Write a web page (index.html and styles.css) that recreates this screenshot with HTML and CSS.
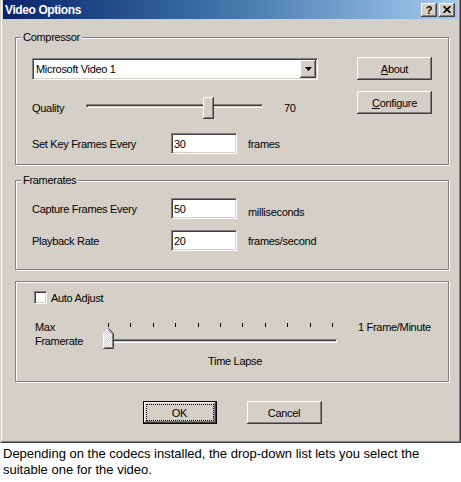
FILE: index.html
```html
<!DOCTYPE html>
<html lang="en">
<head>
<meta charset="utf-8">
<title>Video Options</title>
<link rel="stylesheet" href="styles.css">
</head>
<body>
<div class="window">
  <div class="frame">
    <div class="titlebar">
      <span class="title">Video Options</span>
      <div class="caption-btns">
        <span class="cbtn help">?</span>
        <span class="cbtn close"><svg width="8" height="7" viewBox="0 0 8 7"><path d="M0.6 0.2 L7.4 6.8 M7.4 0.2 L0.6 6.8" stroke="#000" stroke-width="1.7" fill="none"/></svg></span>
      </div>
    </div>
    <div class="client">
      <fieldset class="group">
        <legend>Compressor</legend>
        <div class="gbody comp-body">
          <div class="comp-left">
            <div class="combo">
              <span class="combo-text">Microsoft Video 1</span>
              <span class="combo-btn"><svg width="7" height="4" viewBox="0 0 7 4"><path d="M0 0h7L3.5 4z" fill="#000"/></svg></span>
            </div>
            <div class="row quality-row">
              <span class="q-label">Quality</span>
              <div class="hslider">
                <div class="h-track"></div>
                <div class="h-thumb"></div>
              </div>
              <span class="q-value">70</span>
            </div>
            <div class="row field-row kf-row">
              <span class="f-label">Set Key Frames Every</span>
              <span class="edit">30</span>
              <span class="unit">frames</span>
            </div>
          </div>
          <div class="comp-right">
            <button class="btn side-btn"><u>A</u>bout</button>
            <button class="btn side-btn cfg"><u>C</u>onfigure</button>
          </div>
        </div>
      </fieldset>

      <fieldset class="group g-rates">
        <legend>Framerates</legend>
        <div class="gbody rates-body">
          <div class="row field-row">
            <span class="f-label">Capture Frames Every</span>
            <span class="edit">50</span>
            <span class="unit ms">milliseconds</span>
          </div>
          <div class="row field-row pb-row">
            <span class="f-label">Playback Rate</span>
            <span class="edit">20</span>
            <span class="unit">frames/second</span>
          </div>
        </div>
      </fieldset>

      <fieldset class="group g-lapse">
        <div class="gbody lapse-body">
          <div class="check-row">
            <span class="checkbox"></span>
            <span class="check-label">Auto Adjust</span>
          </div>
          <div class="lapse-row">
            <span class="lapse-label">Max<br>Framerate</span>
            <div class="tslider">
              <div class="ticks"><i></i><i></i><i></i><i></i><i></i><i></i><i></i><i></i><i></i><i></i><i></i></div>
              <div class="t-track"></div>
              <svg class="t-thumb" width="11" height="21" viewBox="0 0 11 21">
                <defs>
                  <pattern id="dith" width="2" height="2" patternUnits="userSpaceOnUse">
                    <rect width="2" height="2" fill="#ffffff"/>
                    <rect width="1" height="1" fill="#D4D0C8"/>
                    <rect x="1" y="1" width="1" height="1" fill="#D4D0C8"/>
                  </pattern>
                </defs>
                <path d="M0.5 5.5 L5.5 0.5 L10.5 5.5 V20.5 H0.5 Z" fill="url(#dith)"/>
                <path d="M0.5 20.5 V5.5 L5.5 0.5" stroke="#ffffff" fill="none"/>
                <path d="M5.5 0.5 L10.5 5.5 V20.5 H0.5" stroke="#404040" fill="none"/>
                <path d="M5.5 2 L9.5 6 V19.5 H1.5" stroke="#808080" fill="none"/>
              </svg>
            </div>
            <span class="lapse-right">1 Frame/Minute</span>
          </div>
          <div class="lapse-caption">Time Lapse</div>
        </div>
      </fieldset>

      <div class="actions">
        <button class="btn btn-default"><span class="focus">OK</span></button>
        <button class="btn btn-cancel">Cancel</button>
      </div>
    </div>
  </div>
</div>
<p class="caption">Depending on the codecs installed, the drop-down list lets you select the suitable one for the video.</p>
</body>
</html>
```

FILE: styles.css
```css
* { box-sizing: border-box; }

html, body {
  margin: 0;
  padding: 0;
  background: #ffffff;
}

body {
  width: 461px;
  height: 482px;
  overflow: hidden;
  font-family: "Liberation Sans", Arial, sans-serif;
  font-size: 11px;
  letter-spacing: -0.3px;
  color: #000;
}

.window {
  width: 461px;
  height: 443px;
  background: #D4D0C8;
  border: 1px solid;
  border-top: 0;
  border-color: #D4D0C8 #404040 #404040 #D4D0C8;
}

.frame {
  height: 100%;
  border: 1px solid;
  border-top: 0;
  border-color: #ffffff #808080 #808080 #ffffff;
  padding: 0 1px 1px 1px;
  display: flex;
  flex-direction: column;
}

.titlebar {
  flex: none;
  height: 19px;
  background: linear-gradient(to right, #0A246A 0%, #3A6EA5 45%, #A6CAF0 100%);
  display: flex;
  align-items: center;
  justify-content: space-between;
  padding: 0 3px 0 2px;
}

.title {
  color: #ffffff;
  font-weight: bold;
  font-size: 12px;
  letter-spacing: -0.4px;
}

.caption-btns {
  display: flex;
  gap: 2px;
}

.cbtn {
  width: 16px;
  height: 14px;
  display: flex;
  align-items: center;
  justify-content: center;
  background: #D4D0C8;
  box-shadow: inset -1px -1px 0 #404040, inset 1px 1px 0 #ffffff, inset -2px -2px 0 #808080;
  font-weight: bold;
  font-size: 11px;
  letter-spacing: 0;
}

.help { padding-top: 1px; }

.client {
  flex: 1;
  padding: 12px 9px 0 12px;
}

/* group boxes */
.group {
  margin: 0;
  padding: 0;
  min-width: 0;
  border: 1px solid #808080;
  box-shadow: inset 1px 1px 0 #ffffff, 1px 1px 0 #ffffff;
}

.group legend {
  padding: 0 2px;
  margin-left: 5px;
  line-height: 13px;
  background: #D4D0C8;
}

.g-rates { margin-top: 9px; }
.g-lapse { margin-top: 11px; }

.gbody { padding: 13px 16px 10px 16px; }

/* compressor */
.comp-body {
  display: flex;
  justify-content: space-between;
}

.comp-left {
  width: 310px;
  display: flex;
  flex-direction: column;
}

.comp-right {
  display: flex;
  flex-direction: column;
}

.combo {
  margin-top: 1px;
  width: 286px;
  height: 22px;
  background: #ffffff;
  border: 1px solid;
  border-color: #808080 #ffffff #ffffff #808080;
  box-shadow: inset 1px 1px 0 #404040, inset -1px -1px 0 #D4D0C8;
  padding: 1px;
  display: flex;
  align-items: center;
}

.combo-text {
  padding-left: 2px;
  flex: 1;
}

.combo-btn {
  width: 16px;
  height: 18px;
  background: #D4D0C8;
  box-shadow: inset -1px -1px 0 #404040, inset 1px 1px 0 #ffffff, inset -2px -2px 0 #808080;
  display: flex;
  align-items: center;
  justify-content: center;
}

.row {
  display: flex;
  align-items: center;
}

.quality-row {
  margin-top: 17px;
  height: 22px;
}

.q-label { width: 54px; }

.hslider {
  position: relative;
  width: 177px;
  height: 22px;
}

.h-track {
  margin-top: 7px;
  height: 4px;
  border: 1px solid;
  border-color: #808080 #ffffff #ffffff #808080;
  box-shadow: inset 1px 1px 0 #404040, inset -1px -1px 0 #D4D0C8;
}

.h-thumb {
  position: absolute;
  left: 117px;
  top: 0;
  width: 11px;
  height: 22px;
  background: #D4D0C8;
  box-shadow: inset -1px -1px 0 #404040, inset 1px 1px 0 #ffffff, inset -2px -2px 0 #808080;
}

.q-value { margin-left: 21px; }

.field-row { height: 21px; }
.kf-row { margin-top: 14px; }

.f-label { width: 139px; }

.edit {
  width: 66px;
  height: 21px;
  background: #ffffff;
  border: 1px solid;
  border-color: #808080 #ffffff #ffffff #808080;
  box-shadow: inset 1px 1px 0 #404040, inset -1px -1px 0 #D4D0C8;
  padding: 0 2px;
  display: flex;
  align-items: center;
}

.unit { margin-left: 11px; }
.ms { margin-top: 6px; }

/* buttons */
.btn {
  font: inherit;
  letter-spacing: inherit;
  color: #000;
  background: #D4D0C8;
  border: 0;
  padding: 0;
  margin: 0;
  display: flex;
  align-items: center;
  justify-content: center;
  box-shadow: inset -1px -1px 0 #404040, inset 1px 1px 0 #ffffff, inset -2px -2px 0 #808080;
}

.side-btn {
  width: 75px;
  height: 23px;
}

.cfg { margin-top: 11px; }

/* framerates */
.rates-body { padding: 11px 16px 18px 16px; }
.pb-row { margin-top: 11px; }

/* time lapse */
.lapse-body {
  padding: 9px 16px 13px 18px;
}

.check-row {
  display: flex;
  align-items: center;
  height: 13px;
}

.checkbox {
  width: 13px;
  height: 13px;
  background: #ffffff;
  border: 1px solid;
  border-color: #808080 #ffffff #ffffff #808080;
  box-shadow: inset 1px 1px 0 #404040, inset -1px -1px 0 #D4D0C8;
}

.check-label { margin-left: 4px; }

.lapse-row {
  margin-top: 16px;
  display: flex;
  align-items: flex-start;
  height: 28px;
}

.lapse-label {
  margin-left: 1px;
  width: 68px;
  line-height: 14px;
}

.tslider {
  position: relative;
  width: 237px;
  height: 28px;
}

.ticks {
  margin: 3px 0 0 5px;
  width: 225px;
  height: 4px;
  display: flex;
  justify-content: space-between;
}

.ticks i {
  width: 1px;
  height: 4px;
  background: #000;
}

.t-track {
  margin: 12px 0 0 5px;
  width: 229px;
  height: 4px;
  border: 1px solid;
  border-color: #808080 #ffffff #ffffff #808080;
  box-shadow: inset 1px 1px 0 #404040, inset -1px -1px 0 #D4D0C8;
}

.t-thumb {
  position: absolute;
  left: 0;
  top: 8px;
}

.lapse-right {
  margin-left: 18px;
  line-height: 14px;
}

.lapse-caption {
  margin-top: 7px;
  padding-left: 174px;
  line-height: 13px;
}

/* bottom buttons */
.actions {
  margin-top: 19px;
  display: flex;
  justify-content: center;
  gap: 30px;
}

.btn-default {
  width: 74px;
  height: 23px;
  border: 1px solid #000;
  padding: 2px;
  align-items: stretch;
}

.focus {
  flex: 1;
  border: 1px dotted #000;
  display: flex;
  align-items: center;
  justify-content: center;
}

.btn-cancel {
  width: 75px;
  height: 23px;
}

.caption {
  margin: 0;
  padding: 3px 3px 0 3px;
  font-size: 13px;
  line-height: 16px;
  letter-spacing: 0;
}
```
